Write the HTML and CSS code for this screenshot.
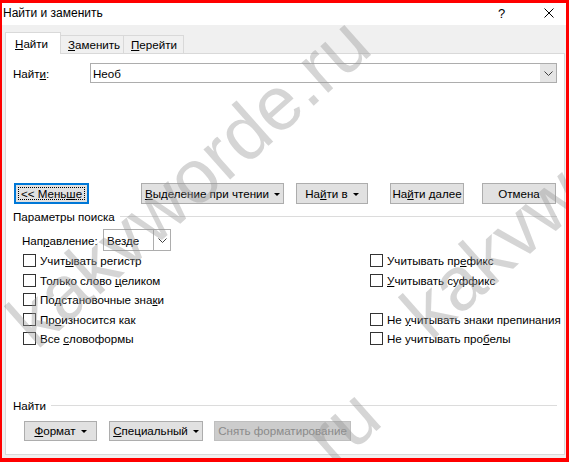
FILE: index.html
```html
<!DOCTYPE html>
<html lang="ru">
<head>
<meta charset="utf-8">
<title>Найти и заменить</title>
<link rel="stylesheet" href="styles.css">
</head>
<body>
<div class="frame">
  <div class="titlebar">
    <span class="title">Найти и заменить</span>
    <span class="help">?</span>
    <span class="close">
      <svg width="10" height="10" viewBox="0 0 10 10"><path d="M0.5 0.5L9.5 9.5M9.5 0.5L0.5 9.5" stroke="#000" stroke-width="1" fill="none"/></svg>
    </span>
  </div>

  <div class="client">
    <div class="tabs">
      <div class="tab tab-active"><span><u>Н</u>айти</span></div>
      <div class="tab tab-2"><span><u>З</u>аменить</span></div>
      <div class="tab tab-3"><span><u>П</u>ерейти</span></div>
    </div>

    <div class="panel">
      <div class="find-row">
        <span class="find-label">Найт<u>и</u>:</span>
        <div class="combo combo-find">
          <span class="combo-text"><span>Необ</span></span>
          <span class="combo-btn">
            <svg width="9" height="5" viewBox="0 0 9 5"><path d="M0.5 0.5L4.5 4.5L8.5 0.5" stroke="#404040" fill="none"/></svg>
          </span>
        </div>
      </div>

      <div class="actions">
        <button class="btn btn-less"><span class="focus"><span>&lt;&lt; Мень<u>ш</u>е</span></span></button>
        <button class="btn btn-reading"><span><u>В</u>ыделение при чтении</span><i class="caret"></i></button>
        <button class="btn btn-findin"><span>На<u>й</u>ти в</span><i class="caret"></i></button>
        <button class="btn btn-next"><span>На<u>й</u>ти далее</span></button>
        <button class="btn btn-cancel"><span>Отмена</span></button>
      </div>

      <div class="group-title group-options"><span>Параметры поиска</span><i class="rule"></i></div>

      <div class="direction">
        <span class="dir-label">Нап<u>р</u>авление:</span>
        <div class="combo combo-dir">
          <span class="combo-text"><span>Везде</span></span>
          <span class="combo-btn combo-btn-split">
            <svg width="9" height="5" viewBox="0 0 9 5"><path d="M0.5 0.5L4.5 4.5L8.5 0.5" stroke="#404040" fill="none"/></svg>
          </span>
        </div>
      </div>

      <div class="options">
        <label class="check"><i class="box"></i><span>Учит<u>ы</u>вать регистр</span></label>
        <label class="check"><i class="box"></i><span>Учитывать пр<u>е</u>фикс</span></label>
        <label class="check"><i class="box"></i><span>Только слово <u>ц</u>еликом</span></label>
        <label class="check"><i class="box"></i><span><u>У</u>читывать суффикс</span></label>
        <label class="check"><i class="box"></i><span>Подстановочные зна<u>к</u>и</span></label>
        <span class="check-empty"></span>
        <label class="check"><i class="box"></i><span>Пр<u>о</u>износится как</span></label>
        <label class="check"><i class="box"></i><span>Не <u>у</u>читывать знаки препинания</span></label>
        <label class="check"><i class="box"></i><span>Все <u>с</u>ловоформы</span></label>
        <label class="check"><i class="box"></i><span>Не учитывать про<u>б</u>елы</span></label>
      </div>

      <div class="group-title group-find"><span>Найти</span><i class="rule"></i></div>

      <div class="format-row">
        <button class="btn btn-format"><span><u>Ф</u>ормат</span><i class="caret"></i></button>
        <button class="btn btn-special"><span><u>С</u>пециальный</span><i class="caret"></i></button>
        <button class="btn btn-clear" disabled><span>Снять форматирование</span></button>
      </div>
    </div>
  </div>

  <span class="wm wm-1">kakvworde.ru</span>
  <span class="wm wm-2">kakvworde.ru</span>
  <span class="wm wm-3">kakvworde.ru</span>
</div>
</body>
</html>
```

FILE: styles.css
```css
html, body {
  margin: 0;
  padding: 0;
  background: #ffffff;
}

body {
  font-family: "Liberation Sans", Arial, sans-serif;
  font-size: 11.6px;
  color: #000;
}

u {
  text-decoration: underline;
  text-underline-offset: 1px;
}

/* outer window with the red outline */
.frame {
  position: relative;
  box-sizing: border-box;
  width: 569px;
  height: 462px;
  border-style: solid;
  border-color: #ff0000;
  border-width: 3px 3px 4px 2px;
  display: flex;
  flex-direction: column;
  overflow: hidden;
  background: #f0f0f0;
}

/* caption */
.titlebar {
  height: 22px;
  flex: none;
  background: #ffffff;
  display: flex;
  align-items: center;
  padding-left: 1px;
}

.title {
  font-size: 12px;
  flex: 1;
  padding-bottom: 2px;
}

.help {
  width: 10px;
  font-size: 13px;
  margin-right: 36px;
  padding-bottom: 2px;
}

.close {
  width: 10px;
  height: 10px;
  margin-right: 12px;
  margin-bottom: 2px;
  display: flex;
}

/* dialog client area */
.client {
  flex: 1;
  display: flex;
  flex-direction: column;
  padding: 0 1px 3px 3px;
}

.tabs {
  height: 28px;
  flex: none;
  display: flex;
  align-items: flex-end;
}

.tab {
  box-sizing: border-box;
  height: 18px;
  border: 1px solid #d9d9d9;
  border-bottom: none;
  background: #f0f0f0;
  padding-left: 7px;
  line-height: 17px;
  white-space: nowrap;
}

.tab-active {
  position: relative;
  z-index: 1;
  width: 56px;
  height: 22px;
  margin-bottom: -1px;
  background: #ffffff;
  padding-left: 9px;
  line-height: 21px;
}

.tab-2 {
  width: 63px;
  border-left: none;
}

.tab-3 {
  width: 60px;
  border-left: none;
}

.panel {
  box-sizing: border-box;
  width: 560px;
  height: 402px;
  background: #ffffff;
  border: 1px solid #d9d9d9;
  padding: 0 7px 0 7px;
  display: flex;
  flex-direction: column;
}

/* combo boxes */
.combo {
  box-sizing: border-box;
  display: flex;
  align-items: stretch;
  border: 1px solid #adadad;
  background: #ffffff;
}

.combo-text {
  flex: 1;
  padding-left: 2px;
  display: flex;
  align-items: center;
}

.combo-btn {
  width: 16px;
  background: #e5e5e5;
  display: flex;
  align-items: center;
  justify-content: center;
}

.combo-btn-split {
  background: #ffffff;
  border-left: 1px solid #adadad;
}

.find-row {
  margin-top: 9px;
  height: 20px;
  display: flex;
  align-items: center;
}

.find-label {
  width: 77px;
}

.combo-find {
  width: 467px;
  height: 20px;
}

/* push buttons */
.btn {
  box-sizing: border-box;
  height: 21px;
  margin: 0;
  padding: 0;
  border: 1px solid #adadad;
  background: #e1e1e1;
  font-family: inherit;
  font-size: 11.6px;
  color: #000;
  display: flex;
  align-items: center;
  justify-content: center;
  white-space: nowrap;
  overflow: visible;
}

.caret {
  display: inline-block;
  flex: none;
  width: 0;
  height: 0;
  margin-left: 5px;
  border-left: 3px solid transparent;
  border-right: 3px solid transparent;
  border-top: 3px solid #000;
  margin-top: 1px;
}

.actions {
  margin-top: 100px;
  height: 21px;
  display: flex;
}

.btn-less {
  width: 75px;
  margin-left: 1px;
  border: 1px solid #0078d7;
  box-shadow: inset 0 0 0 1px #0078d7;
  padding: 3px;
}

.btn-less .focus {
  flex: 1;
  align-self: stretch;
  display: flex;
  align-items: center;
  justify-content: center;
  outline: 1px dotted #000;
  outline-offset: -1px;
}

.btn-reading {
  width: 143px;
  margin-left: 52px;
}

.btn-findin {
  width: 72px;
  margin-left: 12px;
}

.btn-next {
  width: 74px;
  margin-left: 22px;
}

.btn-cancel {
  width: 74px;
  margin-left: 18px;
}

/* group captions with a horizontal rule */
.group-title {
  height: 14px;
  display: flex;
  align-items: center;
  white-space: nowrap;
}

.group-title .rule {
  flex: 1;
  height: 1px;
  background: #dcdcdc;
  margin-left: 5px;
}

.group-options {
  margin-top: 5px;
}

.group-find {
  margin-top: 50px;
}

.direction {
  margin-top: 6px;
  height: 22px;
  display: flex;
  align-items: center;
  padding-left: 9px;
}

.dir-label {
  width: 81px;
}

.combo-dir {
  width: 68px;
  height: 22px;
}

.combo-dir .combo-text {
  padding-left: 3px;
}

/* check boxes, two columns */
.options {
  display: grid;
  grid-template-columns: 347px 1fr;
  grid-auto-rows: 19.5px;
  padding-left: 10px;
}

.check {
  display: flex;
  align-items: center;
  white-space: nowrap;
}

.box {
  box-sizing: border-box;
  width: 13px;
  height: 13px;
  border: 1px solid #333333;
  background: #ffffff;
  margin-right: 4px;
  flex: none;
}

.format-row {
  margin-top: 8px;
  height: 20px;
  display: flex;
}

.format-row .btn {
  height: 20px;
}

.btn-format {
  width: 73px;
  margin-left: 11px;
}

.btn-special {
  width: 94px;
  margin-left: 12px;
}

.btn-clear {
  width: 137px;
  margin-left: 11px;
  background: #cccccc;
  border-color: #bfbfbf;
  color: #8a8a8a;
}

/* diagonal site watermark laid over the dialog */
.wm {
  position: absolute;
  z-index: 5;
  font-family: "Liberation Sans", Arial, sans-serif;
  font-size: 76px;
  line-height: 1;
  color: rgba(150, 150, 150, 0.4);
  white-space: nowrap;
  transform: rotate(-41.5deg);
  transform-origin: 0 0;
  pointer-events: none;
}

.wm-1 {
  left: -8px;
  top: 300px;
}

.wm-2 {
  left: 386px;
  top: 291px;
}

.wm-3 {
  left: 2px;
  top: 672px;
}
```
